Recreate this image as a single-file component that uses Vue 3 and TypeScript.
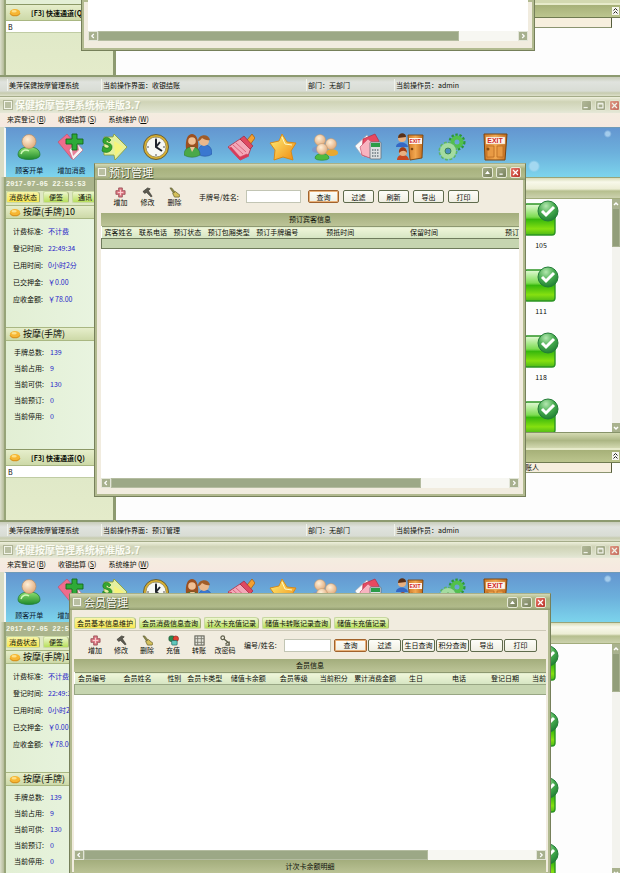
<script setup lang="ts">
interface Column {
  label: string
  width: number
}
interface Tool {
  icon: string
  label: string
}
interface Sign {
  x: number
  y: number
  size: number
}
interface Dialog {
  kind: string
  title?: string
  tabs?: string[]
  tools?: Tool[]
  searchLabel?: string
  actions?: string[]
  heading?: string
  columns?: Column[]
  thumb: number
  footer?: string
}
interface AppWindow {
  id: number
  top: boolean
  bottom: boolean
  screen: string
  payer: string
  dialog: Dialog
}

const modules: (Tool & { sign?: Sign })[] = [
  { icon: 'guest', label: '顾客开单' },
  { icon: 'add', label: '增加消费' },
  { icon: 'arrow', label: '' },
  { icon: 'clock', label: '' },
  { icon: 'couple', label: '' },
  { icon: 'brush', label: '' },
  { icon: 'star', label: '' },
  { icon: 'group', label: '' },
  { icon: 'cards', label: '' },
  { icon: 'shift', label: '', sign: { x: 19, y: 10, size: 5 } },
  { icon: 'gears', label: '' },
  { icon: 'exit', label: '', sign: { x: 14, y: 10, size: 7 } },
]
const menus = [
  { label: '来宾登记', key: 'B' },
  { label: '收银结算', key: 'S' },
  { label: '系统维护', key: 'W' },
]
const bill = [
  ['计费标准:', '不计费'],
  ['登记时间:', '22:49:34'],
  ['已用时间:', '0小时2分'],
  ['已交押金:', '￥0.00'],
  ['应收金额:', '￥78.00'],
]
const counts = [
  ['手牌总数:', '139'],
  ['当前占用:', '9'],
  ['当前可供:', '130'],
  ['当前预订:', '0'],
  ['当前停用:', '0'],
]
const rooms = ['105', '111', '118', '']

const windows: AppWindow[] = [
  {
    id: 1,
    top: false,
    bottom: true,
    screen: '收银结账',
    payer: '',
    dialog: { kind: 'checkout', thumb: 86 },
  },
  {
    id: 2,
    top: true,
    bottom: true,
    screen: '预订管理',
    payer: '结账人',
    dialog: {
      kind: 'booking',
      title: '预订管理',
      tools: [
        { icon: 't-add', label: '增加' },
        { icon: 't-edit', label: '修改' },
        { icon: 't-del', label: '删除' },
      ],
      searchLabel: '手牌号/姓名:',
      actions: ['查询', '过滤', '刷新', '导出', '打印'],
      heading: '预订宾客信息',
      columns: [
        { label: '宾客姓名', width: 34 },
        { label: '联系电话', width: 35 },
        { label: '预订状态', width: 34 },
        { label: '预订包厢类型', width: 49 },
        { label: '预订手牌编号', width: 48 },
        { label: '预抵时间', width: 78 },
        { label: '保留时间', width: 90 },
        { label: '预订', width: 50 },
      ],
      thumb: 78,
    },
  },
  {
    id: 3,
    top: true,
    bottom: false,
    screen: '',
    payer: '',
    dialog: {
      kind: 'members',
      title: '会员管理',
      tabs: ['会员基本信息维护', '会员消费信息查询', '计次卡充值记录', '储值卡转账记录查询', '储值卡充值记录'],
      tools: [
        { icon: 't-add', label: '增加' },
        { icon: 't-edit', label: '修改' },
        { icon: 't-del', label: '删除' },
        { icon: 't-charge', label: '充值' },
        { icon: 't-table', label: '转账' },
        { icon: 't-key', label: '改密码' },
      ],
      searchLabel: '编号/姓名:',
      actions: ['查询', '过滤', '生日查询', '积分查询', '导出', '打印'],
      heading: '会员信息',
      columns: [
        { label: '会员编号', width: 35 },
        { label: '会员姓名', width: 56 },
        { label: '性别', width: 18 },
        { label: '会员卡类型', width: 43 },
        { label: '储值卡余额', width: 44 },
        { label: '会员等级', width: 47 },
        { label: '当前积分', width: 33 },
        { label: '累计消费金额', width: 50 },
        { label: '生日', width: 32 },
        { label: '电话', width: 54 },
        { label: '登记日期', width: 38 },
        { label: '当前', width: 22 },
      ],
      thumb: 76,
      footer: '计次卡余额明细',
    },
  },
]

function share(columns: Column[], column: Column): string {
  const total = columns.reduce((sum, c) => sum + c.width, 0)
  return (column.width / total) * 100 + '%'
}
</script>

<template>
  <main class="desktop">
    <svg class="sprite" aria-hidden="true">
      <defs>
        <linearGradient id="g-green" x1="0" y1="0" x2="0" y2="1">
          <stop offset="0" stop-color="#8fe070" /><stop offset="1" stop-color="#1f8a2c" />
        </linearGradient>
        <linearGradient id="g-gold" x1="0" y1="0" x2="1" y2="1">
          <stop offset="0" stop-color="#fff27a" /><stop offset="1" stop-color="#f08a10" />
        </linearGradient>
        <linearGradient id="g-door" x1="0" y1="0" x2="1" y2="0">
          <stop offset="0" stop-color="#d07a28" /><stop offset="0.5" stop-color="#f2a850" /><stop offset="1" stop-color="#c06a1c" />
        </linearGradient>
        <radialGradient id="g-skin" cx="0.4" cy="0.35" r="0.7">
          <stop offset="0" stop-color="#fff0d8" /><stop offset="1" stop-color="#dfa878" />
        </radialGradient>
        <linearGradient id="g-tile" x1="0" y1="0" x2="0" y2="1">
          <stop offset="0" stop-color="#e4fad8" /><stop offset="0.42" stop-color="#7cdc50" />
          <stop offset="0.5" stop-color="#38b80c" /><stop offset="0.8" stop-color="#86e010" /><stop offset="1" stop-color="#4cb818" />
        </linearGradient>
        <radialGradient id="g-badge" cx="0.4" cy="0.25" r="0.8">
          <stop offset="0" stop-color="#b4e8b0" /><stop offset="0.5" stop-color="#48ac50" /><stop offset="1" stop-color="#1c7c30" />
        </radialGradient>
      </defs>
      <symbol id="guest" viewBox="0 0 28 28">
        <path d="M3 22c0-6 5-8 11-8s11 2 11 8c0 6-22 6-22 0z" fill="url(#g-green)" stroke="#1c7a34" stroke-width=".7" />
        <path d="M6 21c1-4 5-5 8-3" stroke="#d0f8b8" stroke-width="1.5" fill="none" />
        <circle cx="14" cy="8.5" r="7" fill="url(#g-skin)" stroke="#b8885c" stroke-width=".6" />
      </symbol>
      <symbol id="add" viewBox="0 0 28 28">
        <path d="M1 9l9-8 13 15-8 10z" fill="#ef6c8c" stroke="#c04868" stroke-width=".6" />
        <path d="M12 17l7-8 7 8-10 10z" fill="#f6f2f4" stroke="#c06880" stroke-width=".7" />
        <path d="M15 17l6-5 1 5-6 6z" fill="#e88098" />
        <path d="M15 1h5v5h6v5h-6v6h-5v-6H9V6h6z" fill="#2eaa38" stroke="#126a1c" stroke-width=".9" />
      </symbol>
      <symbol id="arrow" viewBox="0 0 28 28">
        <path d="M4 4h9l1-3 13 13-12 13-1-5H4z" fill="#e4f0a0" stroke="#8a9c30" stroke-width=".8" stroke-linejoin="round" />
        <path d="M14 8l10 6-9 9z" fill="#f6f47c" />
        <path d="M11 7C7 2 2 5 3 9c1 3 7 2 6 5-1 2-4 1-6-1l-1 5c4 3 10 1 10-4 0-5-6-3-6-6 0-1 2-1 3 1z" fill="#36a82e" stroke="#14701a" stroke-width=".6" />
      </symbol>
      <symbol id="clock" viewBox="0 0 28 28">
        <circle cx="14" cy="14" r="12.5" fill="#d8b030" stroke="#5e5430" stroke-width=".9" />
        <circle cx="14" cy="14" r="10" fill="#f7f8f4" stroke="#88805c" stroke-width=".7" />
        <path d="M14 6v8l6 4M14 14l4-5" stroke="#20242c" stroke-width="2" fill="none" />
        <path d="M14 4.500v2M14 21v2M5 14h2M21 14h2" stroke="#545454" stroke-width="1" />
      </symbol>
      <symbol id="couple" viewBox="0 0 28 28">
        <path d="M14 21c0-6 2-9 7-9s7 4 7 9c-4 3-10 3-14 0z" fill="#3a78d0" stroke="#1e4a98" stroke-width=".5" />
        <circle cx="20" cy="8" r="5" fill="#eab88c" />
        <path d="M14 8c0-7 11-8 12-1-3 1-6-1-8-2-1 1-2 3-4 3z" fill="#a05c28" />
        <path d="M2 16C1 6 4 1 8 1s7 5 6 15c-4 3-8 3-12 0z" fill="#9c5020" />
        <circle cx="8" cy="8" r="3.800" fill="#f0c094" />
        <path d="M0 22c0-6 4-8 8-8s8 2 8 8c-5 3-11 3-16 0z" fill="#4aa848" stroke="#2a7030" stroke-width=".5" />
        <path d="M6 14l2 5 3-5z" fill="#f0c094" />
      </symbol>
      <symbol id="brush" viewBox="0 0 28 28">
        <path d="M16 12l9-11 3 4-8 11z" fill="#f4a030" stroke="#a86010" stroke-width=".8" />
        <path d="M1 14l12-8 11 9-3 8-8 4z" fill="#f4a8b8" stroke="#b03850" stroke-width=".9" />
        <path d="M13 6l4-3 9 10-3 3z" fill="#e04860" stroke="#9c2840" stroke-width=".7" />
        <path d="M2 15l11 12 9-4-2-2-7 3-9-10zM6 12l10 9M9 10l10 9" fill="#d83858" stroke="#d04864" stroke-width=".7" />
      </symbol>
      <symbol id="star" viewBox="0 0 28 28">
        <path d="M13 1l5 8 9 1-5 8 2 9-10-3-9 3 1-10-5-7 9-2z" fill="url(#g-gold)" stroke="#d88410" stroke-width=".9" stroke-linejoin="round" />
        <path d="M13 4l3 7 7 1" stroke="#fffac8" stroke-width="1" fill="none" />
      </symbol>
      <symbol id="group" viewBox="0 0 28 28">
        <path d="M1 17c0-5 12-5 12 0 0 4-12 4-12 0z" fill="#7898cc" />
        <path d="M15 20c0-5 12-5 12 0 0 4-12 4-12 0z" fill="#e8a830" />
        <circle cx="9" cy="7" r="5.500" fill="url(#g-skin)" stroke="#c09468" stroke-width=".5" />
        <circle cx="20" cy="11" r="5.500" fill="url(#g-skin)" stroke="#c09468" stroke-width=".5" />
        <path d="M4 25c0-6 14-6 14 0 0 3-14 3-14 0z" fill="#4cba40" stroke="#207c28" stroke-width=".5" />
        <circle cx="11" cy="16" r="5.500" fill="url(#g-skin)" stroke="#c09468" stroke-width=".5" />
      </symbol>
      <symbol id="cards" viewBox="0 0 28 28">
        <path d="M1 13L13 2l7 9-11 13z" fill="#fafafa" stroke="#a0a8b8" stroke-width=".7" />
        <path d="M9 6l12-5 4 7-8 17-9-3z" fill="#e84860" stroke="#b02c48" stroke-width=".7" />
        <path d="M6 14l8-8 6 5-4 14-8-3z" fill="#f8b4c0" stroke="#c85870" stroke-width=".7" />
        <rect x="16" y="9" width="11" height="17" rx="1" fill="#dce0e2" stroke="#687078" stroke-width=".8" />
        <rect x="17" y="10" width="9" height="4" fill="#2a9c48" />
        <path d="M18 17h7M18 20h7M18 23h7" stroke="#6c7880" stroke-width="1.500" stroke-dasharray="1.500 1" />
      </symbol>
      <symbol id="exit" viewBox="0 0 28 28">
        <path d="M3 1h23l-2 26H4z" fill="url(#g-door)" stroke="#7a4410" stroke-width="1" />
        <path d="M6 13h7v11H6zM16 13h6v11h-6z" fill="#e89a44" stroke="#b46820" stroke-width=".7" />
        <rect x="5" y="4" width="19" height="7" fill="#fff6ec" stroke="#d8b890" stroke-width=".4" />
        <circle cx="7" cy="16" r="1.500" fill="#8a4c10" />
      </symbol>
      <symbol id="shift" viewBox="0 0 28 28">
        <path d="M12 2h15l-1 23-12 2z" fill="url(#g-door)" stroke="#7a4410" stroke-width=".9" />
        <rect x="13" y="5" width="13" height="6" fill="#fff4ea" />
        <path d="M0 14c0-6 11-6 12 0z" fill="#3468c4" />
        <circle cx="6" cy="5" r="4" fill="#e8b080" />
        <path d="M2 5c0-6 8-6 8-1z" fill="#583018" />
        <path d="M1 27c0-7 11-7 12 0z" fill="#c84820" />
        <circle cx="7" cy="19" r="4" fill="#e8b080" />
        <path d="M3 20c-1-7 8-8 8 0-2-3-5-3-8 0z" fill="#a03c14" />
        <circle cx="16" cy="16" r="1.300" fill="#7a4410" />
      </symbol>
      <symbol id="gears" viewBox="0 0 28 28">
        <circle cx="19" cy="9" r="7" fill="none" stroke="#2c9838" stroke-width="3" stroke-dasharray="2.300 1.600" />
        <circle cx="19" cy="9" r="4.500" fill="none" stroke="#52c04c" stroke-width="4" />
        <circle cx="10" cy="18" r="8" fill="none" stroke="#5cb468" stroke-width="3" stroke-dasharray="2.700 1.500" />
        <circle cx="10" cy="18" r="5.500" fill="none" stroke="#a4dca0" stroke-width="5" />
        <circle cx="10" cy="18" r="3" fill="#4a90c0" stroke="#38803c" stroke-width=".8" />
      </symbol>
      <symbol id="t-add" viewBox="0 0 12 12">
        <path d="M4 1h4v3h3v4H8v3H4V8H1V4h3z" fill="#e07c88" stroke="#8c3c44" stroke-width=".8" />
        <path d="M6 3v6M3 6h6" stroke="#fbd4d4" stroke-width="1" />
      </symbol>
      <symbol id="t-edit" viewBox="0 0 12 12">
        <path d="M1 5l5-4 3 1-2 2 4 6-1 1-5-5-2 1z" fill="#5c5a50" stroke="#2c2a24" stroke-width=".6" />
      </symbol>
      <symbol id="t-del" viewBox="0 0 12 12">
        <path d="M1 1l2 0 4 5-2 1z" fill="#8c8a48" stroke="#56542c" stroke-width=".6" />
        <path d="M4 7l3-2 5 4-1 2-5 0z" fill="#d4c05c" stroke="#68602c" stroke-width=".8" />
      </symbol>
      <symbol id="t-charge" viewBox="0 0 12 12">
        <rect x="1" y="1" width="6" height="6" rx="2" fill="#288c50" stroke="#184c30" stroke-width=".7" />
        <circle cx="8.500" cy="4" r="3" fill="#e04030" stroke="#782018" stroke-width=".6" />
        <rect x="4" y="6" width="6" height="5" rx="1" fill="#60c8bc" stroke="#1c605c" stroke-width=".7" />
      </symbol>
      <symbol id="t-table" viewBox="0 0 12 12">
        <rect x="1" y="1" width="10" height="10" fill="#e4e4dc" stroke="#66665c" stroke-width="1.200" />
        <path d="M1 4h10M1 8h10M4 1v10M8 1v10" stroke="#7c7c70" stroke-width="1" />
      </symbol>
      <symbol id="t-key" viewBox="0 0 12 12">
        <circle cx="3" cy="3" r="2" fill="none" stroke="#5c5c48" stroke-width="1.300" />
        <path d="M4 4l6 5M8 8l-2 2M10 7v4H6" stroke="#5c5c48" stroke-width="1.400" fill="none" />
      </symbol>
      <symbol id="room" viewBox="0 0 36 37">
        <rect x="1" y="5" width="31" height="31" rx="3" fill="url(#g-tile)" stroke="#2c9424" stroke-width="1.400" />
        <circle cx="25" cy="12" r="10" fill="url(#g-badge)" stroke="#237c38" stroke-width="1" />
        <path d="M19 12l4 4 8-8" stroke="#fff" stroke-width="3" fill="none" />
      </symbol>
      <symbol id="coin" viewBox="0 0 14 10">
        <ellipse cx="7" cy="6" rx="6" ry="3.500" fill="#d89420" />
        <ellipse cx="7" cy="4.500" rx="6" ry="3.500" fill="#f6b634" />
        <ellipse cx="6" cy="3.500" rx="3" ry="1.500" fill="#fde088" />
      </symbol>
    </svg>

    <section v-for="win in windows" :key="win.id" class="app">
      <template v-if="win.top">
        <header class="titlebar">
          <i class="sysicon"></i>
          <h1>保健按摩管理系统标准版3.7</h1>
          <div class="winbtns faded">
            <button type="button" aria-label="最小化"><svg viewBox="0 0 11 11"><path d="M2 8h5" /></svg></button>
            <button type="button" aria-label="最大化"><svg viewBox="0 0 11 11"><path d="M2.500 3.500h6v5h-6zM2.500 3h6" /></svg></button>
            <button type="button" class="close" aria-label="关闭"><svg viewBox="0 0 11 11"><path d="M2.500 2.500l6 6M8.500 2.500l-6 6" /></svg></button>
          </div>
        </header>
        <nav class="menubar">
          <a v-for="m in menus" :key="m.key" href="#">{{ m.label }} (<u>{{ m.key }}</u>)</a>
        </nav>
        <div class="modules">
          <div class="module-row">
            <button v-for="m in modules" :key="m.icon" type="button" class="module" :aria-label="m.icon">
              <svg viewBox="0 0 28 28">
                <use :href="'#' + m.icon" width="28" height="28" />
                <text v-if="m.sign" class="sign" :x="m.sign.x" :y="m.sign.y" :font-size="m.sign.size">EXIT</text>
              </svg>
              <span>{{ m.label }}</span>
            </button>
          </div>
        </div>
      </template>

      <div class="workspace">
        <aside class="sidebar">
          <template v-if="win.top">
            <time class="clock">2017-07-05 22:53:53</time>
            <div class="side-tabs">
              <button type="button" class="tab active">消费状态</button>
              <button type="button" class="tab">便签</button>
              <button type="button" class="tab">通讯</button>
            </div>
            <h2 class="side-head"><svg><use href="#coin" /></svg>按摩(手牌)10</h2>
            <dl class="facts bill">
              <div v-for="f in bill" :key="f[0]"><dt>{{ f[0] }}</dt><dd>{{ f[1] }}</dd></div>
            </dl>
            <h2 class="side-head"><svg><use href="#coin" /></svg>按摩(手牌)</h2>
            <dl class="facts counts">
              <div v-for="f in counts" :key="f[0]"><dt>{{ f[0] }}</dt><dd>{{ f[1] }}</dd></div>
            </dl>
          </template>
          <div v-else class="stub"></div>
          <template v-if="win.bottom">
            <label class="side-head quick" :for="'quick' + win.id"><svg><use href="#coin" /></svg>[F3] 快速通道(Q)</label>
            <input :id="'quick' + win.id" class="quick-input" type="text" value="B" />
            <div class="side-rest"></div>
          </template>
        </aside>

        <div class="content">
          <template v-if="win.top">
            <div class="content-head"></div>
            <div class="rooms">
              <ul>
                <li v-for="(r, i) in rooms" :key="i"><svg><use href="#room" /></svg><span>{{ r }}</span></li>
              </ul>
              <div class="vscroll">
                <button type="button" aria-label="向上"><svg viewBox="0 0 8 8"><path d="M2 5l2-2 2 2" /></svg></button>
                <i class="vthumb"></i>
                <button type="button" class="down" aria-label="向下"><svg viewBox="0 0 8 8"><path d="M2 3l2 2 2-2" /></svg></button>
              </div>
            </div>
          </template>
          <template v-if="win.bottom">
            <div class="band" :class="{ short: !win.top }"></div>
            <div class="sub-head">
              <button type="button" aria-label="展开"><svg viewBox="0 0 7 8"><path d="M1.500 3.500l2-2 2 2M1.500 6.500l2-2 2 2" /></svg></button>
            </div>
            <div class="sub-row"><span>{{ win.payer }}</span></div>
            <div class="blank"></div>
          </template>
        </div>
      </div>

      <footer v-if="win.bottom" class="status">
        <span>美萍保健按摩管理系统</span>
        <span>当前操作界面：{{ win.screen }}</span>
        <span>部门：无部门</span>
        <span>当前操作员：admin</span>
      </footer>

      <section class="dialog" :class="win.dialog.kind">
        <header v-if="win.dialog.title" class="dialog-title">
          <i class="sysicon"></i>
          <h2>{{ win.dialog.title }}</h2>
          <div class="winbtns">
            <button type="button" aria-label="收起"><svg viewBox="0 0 11 11"><path d="M4 6.500l1.500-2L7 6.500z" /></svg></button>
            <button type="button" aria-label="最小化"><svg viewBox="0 0 11 11"><path d="M3 7.500h4" /></svg></button>
            <button type="button" class="close" aria-label="关闭"><svg viewBox="0 0 11 11"><path d="M2.500 2.500l6 6M8.500 2.500l-6 6" /></svg></button>
          </div>
        </header>
        <div v-if="win.dialog.tabs" class="dialog-tabs">
          <button v-for="(t, i) in win.dialog.tabs" :key="t" type="button" class="tab" :class="{ active: i === 0 }">{{ t }}</button>
        </div>
        <form v-if="win.dialog.tools" class="dialog-tools" @submit.prevent>
          <button v-for="t in win.dialog.tools" :key="t.label" type="button" class="tool">
            <svg><use :href="'#' + t.icon" /></svg>{{ t.label }}
          </button>
          <label :for="'search' + win.id">{{ win.dialog.searchLabel }}</label>
          <input :id="'search' + win.id" type="text" />
          <div class="actions">
            <button v-for="(a, i) in win.dialog.actions" :key="a" type="button" :class="{ primary: i === 0 }">{{ a }}</button>
          </div>
        </form>
        <h3 v-if="win.dialog.heading" class="strip">{{ win.dialog.heading }}</h3>
        <div class="grid-area">
          <table v-if="win.dialog.columns">
            <colgroup>
              <col v-for="c in win.dialog.columns" :key="c.label" :style="{ width: share(win.dialog.columns, c) }" />
            </colgroup>
            <thead>
              <tr><th v-for="c in win.dialog.columns" :key="c.label" scope="col">{{ c.label }}</th></tr>
            </thead>
            <tbody>
              <tr><td v-for="c in win.dialog.columns" :key="c.label"></td></tr>
            </tbody>
          </table>
        </div>
        <div class="hscroll">
          <button type="button" aria-label="向左"><svg viewBox="0 0 10 10"><path d="M6 2.500L3.500 5 6 7.500" /></svg></button>
          <div class="htrack"><i class="hthumb" :style="{ width: win.dialog.thumb + '%' }"></i></div>
          <button type="button" aria-label="向右"><svg viewBox="0 0 10 10"><path d="M4 2.500L6.500 5 4 7.500" /></svg></button>
        </div>
        <h3 v-if="win.dialog.footer" class="strip foot">{{ win.dialog.footer }}</h3>
      </section>
    </section>
  </main>
</template>

<style>
body {
  margin: 0;
  background: #d9dcc4;
}
</style>

<style scoped>
* {
  box-sizing: border-box;
}
.desktop {
  display: flex;
  flex-direction: column;
  height: 100vh;
  overflow: hidden;
  font: 7px/10px "Noto Sans CJK SC", "Liberation Sans", sans-serif;
  color: #0c0e08;
}
.sprite {
  position: absolute;
  width: 0;
  height: 0;
}
button,
input {
  font: inherit;
  color: inherit;
  padding: 0;
  margin: 0;
  border: 0;
  background: none;
  border-radius: 0;
  white-space: nowrap;
}
svg {
  display: block;
  flex: none;
}
h1,
h2,
h3,
dl,
dd,
ul {
  margin: 0;
  padding: 0;
  font-weight: 400;
}
.app {
  position: relative;
  display: flex;
  flex-direction: column;
  flex: none;
  overflow: hidden;
}
.app:last-child {
  flex: 1 0 332px;
}

/* main window chrome */
.titlebar {
  display: flex;
  flex: none;
  align-items: center;
  height: 17px;
  padding-left: 4px;
  border-top: 1px solid #a4ab88;
  background: linear-gradient(#eef0dc, #cfd3b6 30%, #dde1cb 80%, #e6e8d8);
}
.titlebar h1 {
  flex: 1;
  margin-left: 3px;
  font-size: 10px;
  line-height: 14px;
  font-weight: 700;
  color: #fbfcf4;
  text-shadow: 1px 1px 0 #c0c5a8;
}
.sysicon {
  width: 8px;
  height: 8px;
  border: 1px solid #f2f4e8;
  outline: 1px solid #aeb496;
  background: #b9bfa2;
}
.winbtns {
  display: flex;
  gap: 3px;
}
.winbtns button {
  width: 11px;
  height: 11px;
  border: 1px solid #e6e9d6;
  border-radius: 2px;
  background: linear-gradient(135deg, #a2aa88, #78815c);
}
.winbtns .close {
  background: linear-gradient(135deg, #e87868, #b83028);
}
.winbtns svg {
  width: 9px;
  height: 9px;
}
.winbtns path {
  fill: none;
  stroke: #fff;
  stroke-width: 1.5;
}
.faded {
  opacity: 0.65;
}
.menubar {
  display: flex;
  flex: none;
  gap: 12px;
  height: 14px;
  padding: 0 7px;
  line-height: 12px;
  background: linear-gradient(#f4ede0, #f6e8e0);
}
.menubar a {
  color: inherit;
  text-decoration: none;
  white-space: pre;
}
.modules {
  flex: none;
  height: 50px;
  margin-left: 4px;
  padding-left: 2px;
  border-left: 2px solid #f3f6f4;
  border-top: 1px solid #6f9ab8;
  background:
    radial-gradient(circle at 86% 78%, #a4d8f0 0 4px, transparent 6px),
    radial-gradient(circle at 98% 12%, #a4ccec 0 2px, transparent 4px),
    linear-gradient(#6496d0, #6cb0dc 50%, #7cd4ec);
}
.module-row {
  display: flex;
  width: 83%;
}
.module {
  display: flex;
  flex: 1;
  flex-direction: column;
  align-items: center;
  height: 49px;
  padding-top: 5px;
  color: #0c1a30;
}
.module svg {
  width: 28px;
  height: 28px;
}
.sign {
  font-family: "Liberation Sans", sans-serif;
  font-weight: 700;
  text-anchor: middle;
  fill: #d02828;
}
.module span {
  margin-top: 4px;
  line-height: 10px;
}

/* left column */
.workspace {
  display: grid;
  grid-template-columns: 112px 1fr;
  flex: 1 0 auto;
  padding-left: 4px;
  background: linear-gradient(90deg, #dcdfcc, #b4bb98 4px);
}
.sidebar {
  display: flex;
  flex-direction: column;
  min-width: 0;
  border-left: 2px solid #97a478;
  border-right: 3px solid #8d9a70;
  background: #e8f1da;
}
.clock {
  height: 14px;
  font: 700 7px/14px "Liberation Mono", monospace;
  color: #f6f8ea;
  background: #aab48c;
  white-space: nowrap;
}
.side-tabs {
  display: flex;
  gap: 3px;
  height: 14px;
  background: #dfe8c4;
}
.tab {
  height: 12px;
  padding: 0 2px;
  line-height: 11px;
  border: 1px solid #c8d8a0;
  border-right-color: #a4b078;
  border-radius: 2px 4px 2px 2px;
  background: linear-gradient(#eef6d0, #b8e05c);
}
.tab.active {
  background: linear-gradient(#f8f4a8, #f8e850);
}
.side-tabs .tab {
  padding: 0 5px;
}
.side-tabs .active {
  padding: 0 2px;
}
.side-head {
  display: flex;
  align-items: center;
  gap: 2px;
  height: 14px;
  padding-left: 3px;
  font-size: 9px;
  line-height: 12px;
  border-top: 1px solid #a9b782;
  border-bottom: 1px solid #a9b782;
  background: linear-gradient(#e6eecb, #cdd9a8);
  white-space: nowrap;
}
.side-head svg {
  width: 12px;
  height: 9px;
}
.facts {
  height: 108px;
  background: linear-gradient(90deg, #e2efd4, #eaf5e2);
}
.facts div {
  display: flex;
}
.facts dt {
  width: 35px;
}
.facts dd {
  color: #2424c8;
  white-space: nowrap;
}
.bill {
  padding: 4px 0 0 7px;
  line-height: 17px;
}
.counts {
  padding: 3px 0 0 8px;
  line-height: 16px;
}
.counts dt {
  width: 36px;
}
.stub {
  height: 4px;
  background: #e4efd6;
}
.quick {
  gap: 10px;
  height: 17px;
  font-size: 7px;
  font-weight: 700;
  border-top-color: #8b9866;
}
.quick-input {
  width: 100%;
  height: 12px;
  padding-left: 2px;
  border-bottom: 1px solid #c0cca4;
  background: #fff;
}
.side-rest {
  flex: 1;
  min-height: 42px;
  background: linear-gradient(#e0e9c8, #e4ebca);
}

/* right column */
.content {
  display: flex;
  flex-direction: column;
  min-width: 0;
  background: #fdfdfd;
}
.content-head {
  height: 22px;
  border-top: 1px solid #98a478;
  border-bottom: 1px solid #a2ac7c;
  background: linear-gradient(#d8dcb8, #f8f8ea 20%, #ecedd4 55%, #b6bf8e 65%, #ccd2ae);
}
.rooms {
  display: flex;
  justify-content: flex-end;
  height: 233px;
  overflow: hidden;
}
.rooms ul {
  width: 36px;
  margin-right: 53px;
  list-style: none;
}
.rooms li {
  display: flex;
  flex-direction: column;
  align-items: center;
  height: 66px;
}
.rooms svg {
  width: 36px;
  height: 37px;
}
.rooms span {
  margin-top: 4px;
  line-height: 10px;
}
.vscroll {
  display: flex;
  flex-direction: column;
  width: 8px;
  background: #f3f3ee;
}
.vscroll button {
  width: 8px;
  height: 9px;
  background: #a9b28e;
}
.vscroll svg,
.hscroll svg {
  width: 8px;
  height: 8px;
}
.vscroll path,
.hscroll path {
  fill: none;
  stroke: #fff;
  stroke-width: 1.5;
}
.vthumb {
  height: 39px;
  border: 1px solid #a9b292;
  background: #929e7a;
}
.vscroll .down {
  margin-top: auto;
}
.band {
  height: 18px;
  border-top: 1px solid #87936a;
  border-bottom: 2px solid #e6eaca;
  background: linear-gradient(#d4dab2, #acb684 50%, #d2d8b0);
}
.band.short {
  height: 5px;
  border-top: 0;
  background: #d2d8b0;
}
.sub-head {
  display: flex;
  justify-content: flex-end;
  align-items: center;
  height: 13px;
  padding-right: 1px;
  border-bottom: 1px solid #6f7a50;
  background: linear-gradient(#a6b078, #bcc58e);
}
.sub-head button {
  width: 7px;
  height: 8px;
  background: #f6f6ee;
}
.sub-head svg {
  width: 7px;
  height: 8px;
}
.sub-head path {
  fill: none;
  stroke: #222;
  stroke-width: 1;
}
.sub-row {
  height: 10px;
  margin-right: 8px;
  padding-right: 72px;
  text-align: right;
  line-height: 9px;
  border-right: 1px solid #555c3c;
  border-bottom: 1px solid #8b9470;
  background: #f7efde;
}
.blank {
  flex: 1;
  min-height: 47px;
}
.status {
  display: grid;
  grid-template-columns: 94px 205fr 88fr 226fr;
  height: 21px;
  padding: 2px 0 0 7px;
  border-top: 2px solid #8d9a70;
  background: linear-gradient(#c8ccba, #e0e3de 5px, #d8dcd4 14px, #c6cbae 16px, #dde0ca);
}
.status span {
  height: 12px;
  padding-left: 1px;
  line-height: 12px;
  border-left: 1px solid #f0f2ea;
  white-space: nowrap;
}

/* floating windows */
.dialog {
  position: absolute;
  display: flex;
  flex-direction: column;
  border: 1px solid #76805a;
  border-top-color: #a8b088;
  background: #f1ecdf;
  box-shadow: inset 0 0 0 2px #b2ba90;
}
.checkout {
  top: -1px;
  left: 81px;
  right: 85px;
  bottom: 45px;
  padding: 0 6px 9px;
}
.booking {
  top: 67px;
  left: 94px;
  right: 94px;
  bottom: 44px;
  padding: 0 6px 8px;
}
.members {
  top: 52px;
  left: 69px;
  right: 69px;
  bottom: -2px;
  padding: 0 4px;
}
.dialog-title {
  display: flex;
  align-items: center;
  flex: none;
  height: 16px;
  margin: 0 -6px;
  padding: 0 4px 0 3px;
  background: linear-gradient(#d4dab8, #a8b27e 30%, #b0ba8a 80%, #8d986c);
}
.members .dialog-title {
  margin: 0 -4px;
}
.dialog-title h2 {
  flex: 1;
  margin-left: 3px;
  font-size: 11px;
  line-height: 15px;
  color: #f9faf2;
  text-shadow: 1px 1px 0 #4e5638, -1px 0 0 #79825e;
}
.dialog-tabs {
  display: flex;
  flex: none;
  gap: 3px;
  height: 21px;
  padding-top: 7px;
  border-bottom: 1px solid #cdc9b8;
}
.dialog-tools {
  display: flex;
  align-items: center;
  flex: none;
  height: 33px;
  padding-left: 6px;
}
.members .dialog-tools {
  height: 28px;
  padding-left: 8px;
}
.tool {
  display: flex;
  flex-direction: column;
  align-items: center;
  width: 27px;
  line-height: 9px;
}
.members .tool {
  width: 26px;
}
.tool svg {
  width: 11px;
  height: 11px;
}
.dialog-tools label {
  min-width: 47px;
  margin-left: 11px;
  white-space: nowrap;
}
.members label {
  min-width: 40px;
  margin-left: 6px;
}
.dialog-tools input {
  width: 55px;
  height: 13px;
  border: 1px solid #c2c5b4;
  background: #fff;
}
.members input {
  width: 47px;
}
.actions {
  display: flex;
  gap: 4px;
  margin-left: 7px;
}
.members .actions {
  gap: 1px;
  margin-left: 3px;
}
.actions button {
  width: 31px;
  height: 13px;
  line-height: 10px;
  border: 1px solid #5f6b4c;
  border-radius: 2px;
  background: linear-gradient(#fdfdf8, #efeee2);
}
.members .actions button {
  width: 33px;
}
.actions .primary {
  border-color: #a0622c;
  box-shadow: inset 0 0 0 1px #e8b078;
}
.strip {
  flex: none;
  height: 13px;
  font-size: 7px;
  line-height: 13px;
  text-align: center;
  background: linear-gradient(#a3ad7c, #bcc497);
}
.grid-area {
  flex: 1;
  min-height: 0;
  overflow: hidden;
  background: #fff;
}
table {
  width: 100%;
  table-layout: fixed;
  border-collapse: collapse;
}
th {
  height: 12px;
  padding: 0;
  font-weight: 400;
  line-height: 10px;
  vertical-align: top;
  white-space: nowrap;
  border-top: 1px solid #8d9870;
  background: linear-gradient(#f0f6da, #d5e5c2);
}
th:last-child {
  text-align: right;
}
td {
  height: 10px;
  padding: 0;
  border-top: 1px solid #6f7c5c;
  border-bottom: 1px solid #6f7c5c;
  background: #c6d5b0;
}
td:first-child {
  border-left: 1px solid #6f7c5c;
}
.members td {
  border-color: #98a684;
}
.hscroll {
  display: flex;
  flex: none;
  height: 10px;
  background: #f7f7f2;
}
.hscroll button {
  width: 10px;
  height: 10px;
  border: 1px solid #e2e5d8;
  background: #a7b08e;
}
.htrack {
  flex: 1;
}
.hthumb {
  display: block;
  height: 10px;
  border: 1px solid #b4bca0;
  background: #9ca886;
}
.foot {
  height: 14px;
}
</style>
